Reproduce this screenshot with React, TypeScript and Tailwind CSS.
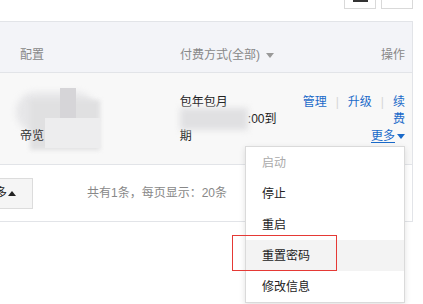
const font = { fontFamily: '"Liberation Sans", "Noto Sans CJK SC", sans-serif' };

function Caret({ up = false }: { up?: boolean }) {
  return (
    <svg width="8" height="5" viewBox="0 0 8 5" className="inline-block">
      {up ? <path d="M0 5 L4 0 L8 5 Z" fill="#222" /> : <path d="M0 0 L8 0 L4 5 Z" fill="currentColor" />}
    </svg>
  );
}

const menuItems = ['启动', '停止', '重启', '重置密码', '修改信息'];

export default function App() {
  return (
    <div className="relative w-[423px] h-[304px] overflow-hidden bg-white text-[12px] text-[#222]" style={font}>
      {/* top tool buttons, cut by the viewport */}
      <div className="flex h-[21px] justify-end gap-[5px] pr-[10px]">
        <div className="h-[9px] w-[32px] border border-t-0 border-[#d9d9d9] bg-white">
          <div className="mx-auto h-[2px] w-[15px] bg-[#333]" />
        </div>
        <div className="h-[9px] w-[32px] border border-t-0 border-[#d9d9d9] bg-white" />
      </div>

      {/* table panel */}
      <div className="w-[413px] border-y border-r border-[#e2e4e8]">
        <div className="flex h-[51px] items-center border-b border-[#e2e4e8] bg-[#f3f4f8] pt-[16px] text-[#888]">
          <div className="w-[180px] pl-[20px]">配置</div>
          <div className="flex flex-1 items-center gap-[6px]">
            付费方式(全部)
            <span className="text-[#999]"><Caret /></span>
          </div>
          <div className="pr-[7px]">操作</div>
        </div>

        <div className="flex h-[92px] border-b border-[#e2e4e8] bg-[#f8f8f8] pt-[21px] leading-[17px]">
          <div className="relative w-[180px]">
            <div className="absolute left-[16px] top-[-2px] h-[40px] w-[80px] rounded-[20px] bg-[#e6e6e8] blur-[3px]" />
            <div className="absolute left-[30px] top-[6px] h-[50px] w-[70px] bg-[#e0e0e1] blur-[2px]" />
            <div className="absolute left-[60px] top-[-6px] h-[30px] w-[16px] bg-[#d6d5d8]" />
            <div className="absolute left-[45px] top-[24px] h-[30px] w-[55px] bg-[#ededee]" />
            <div className="absolute left-[20px] top-[34px] text-[#333]">帝览</div>
          </div>
          <div className="w-[123px]">
            <div>包年包月</div>
            <div className="relative">
              <div className="absolute left-0 top-[-3px] h-[22px] w-[68px] bg-[#e0e0e2] blur-[3px]" />
              <div className="pl-[68px]">:00到</div>
            </div>
            <div>期</div>
          </div>
          <div className="flex-1 pr-[7px] text-right text-[#1a6ac9]">
            <div className="whitespace-nowrap">
              管理<span className="mx-[9px] text-[#d6d6d6]">|</span>升级<span className="mx-[9px] text-[#d6d6d6]">|</span>续
            </div>
            <div>费</div>
            <div className="flex items-center justify-end gap-[2px]">
              <span className="underline underline-offset-2">更多</span>
              <Caret />
            </div>
          </div>
        </div>

        <div className="flex h-[56px] items-center">
          <div className="ml-[-18px] flex h-[31px] w-[51px] items-center justify-end gap-[1px] border border-[#dcdcdc] bg-[#f5f5f5] pr-[16px]">
            更多<Caret up />
          </div>
          <div className="ml-[54px] text-[#888]">共有1条，每页显示：20条</div>
        </div>
      </div>

      {/* dropdown menu */}
      <div className="absolute left-[245px] top-[146px] w-[160px] border border-[#dadada] bg-white shadow-[0_2px_6px_rgba(0,0,0,0.12)]">
        {menuItems.map((item, i) => (
          <div
            key={item}
            className={`flex h-[31px] items-center pl-[16px] ${i === 0 ? 'text-[#aaa]' : ''} ${i === 3 ? 'bg-[#f3f3f3]' : ''}`}
          >
            {item}
          </div>
        ))}
      </div>

      {/* red highlight box */}
      <div className="absolute left-[232px] top-[235px] h-[36px] w-[105px] border border-[#e53935]" />
    </div>
  );
}
